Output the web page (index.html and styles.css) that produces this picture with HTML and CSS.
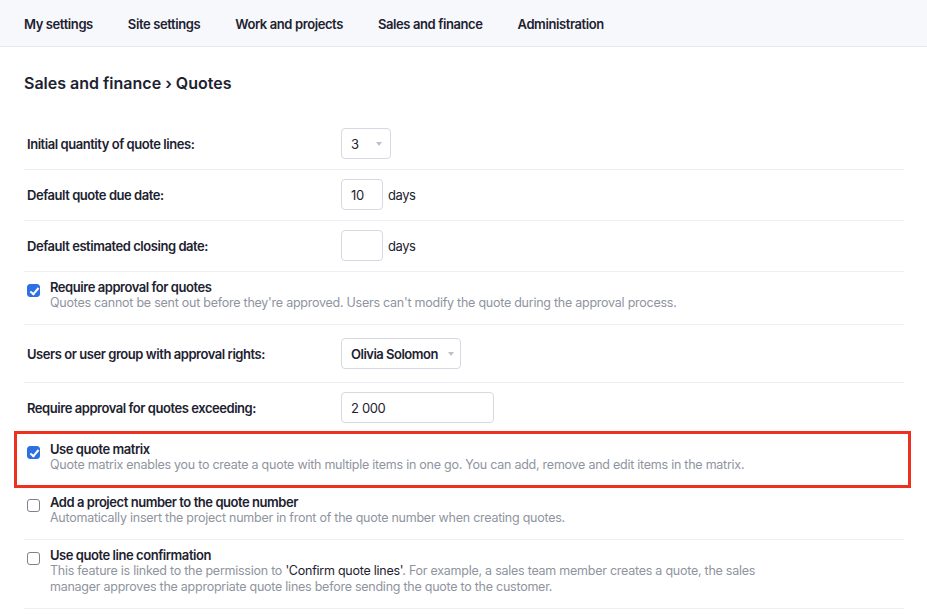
FILE: index.html
```html
<!DOCTYPE html>
<html lang="en">
<head>
    <meta charset="UTF-8">
    <meta name="viewport" content="width=device-width, initial-scale=1.0">
    <title>Sales and finance - Quotes</title>
    <link rel="stylesheet" href="styles.css">
</head>
<body>
    <nav class="top-nav">
        <a href="#">My settings</a>
        <a href="#">Site settings</a>
        <a href="#">Work and projects</a>
        <a href="#">Sales and finance</a>
        <a href="#">Administration</a>
    </nav>

    <main class="page">
        <h1 class="page-title">Sales and finance › Quotes</h1>

        <div class="settings">
            <div class="row">
                <label class="row-label">Initial quantity of quote lines:</label>
                <div class="control">
                    <div class="select select-small">3<span class="caret"></span></div>
                </div>
            </div>

            <div class="row">
                <label class="row-label">Default quote due date:</label>
                <div class="control">
                    <input class="field field-days" type="text" value="10">
                    <span class="unit">days</span>
                </div>
            </div>

            <div class="row">
                <label class="row-label">Default estimated closing date:</label>
                <div class="control">
                    <input class="field field-days" type="text" value="">
                    <span class="unit">days</span>
                </div>
            </div>

            <div class="row check-row">
                <span class="checkbox checked"></span>
                <div class="check-text">
                    <div class="check-title">Require approval for quotes</div>
                    <div class="check-desc">Quotes cannot be sent out before they're approved. Users can't modify the quote during the approval process.</div>
                </div>
            </div>

            <div class="row row-tall">
                <label class="row-label">Users or user group with approval rights:</label>
                <div class="control">
                    <div class="select select-user">Olivia Solomon<span class="caret"></span></div>
                </div>
            </div>

            <div class="row">
                <label class="row-label">Require approval for quotes exceeding:</label>
                <div class="control">
                    <input class="field field-amount" type="text" value="2 000">
                </div>
            </div>

            <div class="row check-row highlight">
                <span class="checkbox checked"></span>
                <div class="check-text">
                    <div class="check-title">Use quote matrix</div>
                    <div class="check-desc">Quote matrix enables you to create a quote with multiple items in one go. You can add, remove and edit items in the matrix.</div>
                </div>
            </div>

            <div class="row check-row">
                <span class="checkbox"></span>
                <div class="check-text">
                    <div class="check-title">Add a project number to the quote number</div>
                    <div class="check-desc">Automatically insert the project number in front of the quote number when creating quotes.</div>
                </div>
            </div>

            <div class="row check-row">
                <span class="checkbox"></span>
                <div class="check-text">
                    <div class="check-title">Use quote line confirmation</div>
                    <div class="check-desc">This feature is linked to the permission to <b class="quoted">'Confirm quote lines'</b>. For example, a sales team member creates a quote, the sales manager approves the appropriate quote lines before sending the quote to the customer.</div>
                </div>
            </div>
        </div>
    </main>
</body>
</html>
```

FILE: styles.css
```css
body {
    margin: 0;
    font-family: Inter, "Noto Sans", sans-serif;
    color: #1d2230;
    background: #fff;
    font-size: 13px;
    letter-spacing: -0.45px;
}

/* top navigation */
.top-nav {
    display: flex;
    gap: 35px;
    height: 47px;
    align-items: center;
    padding: 2px 24px 0;
    background: #f7f8fb;
    border-bottom: 1px solid #e6e8ee;
    box-sizing: border-box;
}
.top-nav a {
    color: #1d2230;
    text-decoration: none;
    font-size: 13px;
    font-weight: 600;
    letter-spacing: -0.4px;
}

.page {
    padding: 0 23px 0 24px;
}
.page-title {
    margin: 0;
    padding: 26px 0 26px;
    font-size: 16px;
    line-height: 20px;
    font-weight: 600;
    letter-spacing: 0;
}

.settings {
    width: 880px;
}

.row {
    display: flex;
    align-items: center;
    padding: 9px 0 10px 3px;
    border-bottom: 1px solid #eceef3;
    position: relative;
}
.row-tall {
    padding: 13px 0 13px 3px;
}
.row-label {
    width: 314px;
    font-weight: 600;
    font-size: 13px;
}
.control {
    display: flex;
    align-items: center;
    gap: 5px;
}

.select,
.field {
    height: 31px;
    box-sizing: border-box;
    border: 1px solid #d6d9e1;
    border-radius: 4px;
    font-family: inherit;
    font-size: 13px;
    letter-spacing: -0.35px;
    color: #1d2230;
    background: #fff;
}
.select {
    display: flex;
    align-items: center;
    padding: 0 9px;
    position: relative;
}
.select-small {
    width: 50px;
}
.select-user {
    width: 120px;
    font-weight: 600;
    letter-spacing: -0.5px;
}
.caret {
    position: absolute;
    right: 8px;
    top: 13px;
    border-left: 3.5px solid transparent;
    border-right: 3.5px solid transparent;
    border-top: 4.5px solid #bdc1ca;
}
.select-user .caret {
    right: 6px;
}
.field {
    padding: 0 9px;
    outline: none;
}
.field-days {
    width: 42px;
}
.field-amount {
    width: 153px;
}

/* checkbox rows */
.check-row {
    align-items: flex-start;
    padding: 7px 0 13px 3px;
}
.checkbox {
    width: 13px;
    height: 13px;
    margin-top: 5px;
    margin-right: 10px;
    box-sizing: border-box;
    border: 1px solid #7d818c;
    border-radius: 3px;
    flex-shrink: 0;
    background: #fff;
}
.checkbox.checked {
    background: #2f6fe4;
    border-color: #2f6fe4;
    position: relative;
}
.checkbox.checked::after {
    content: "";
    position: absolute;
    left: 3.5px;
    top: 1px;
    width: 3px;
    height: 7px;
    border: solid #fff;
    border-width: 0 2px 2px 0;
    transform: rotate(40deg);
}
.check-title {
    font-weight: 600;
    line-height: 16px;
}
.check-desc {
    color: #8f94a0;
    line-height: 16px;
    font-size: 12.5px;
    letter-spacing: -0.25px;
    max-width: 720px;
}
.quoted {
    color: #1d2230;
    font-weight: 400;
}

/* annotation box */
.highlight::after {
    content: "";
    position: absolute;
    left: -10px;
    right: -7px;
    top: -3px;
    bottom: -2px;
    border: 3px solid #f0301f;
}
```
